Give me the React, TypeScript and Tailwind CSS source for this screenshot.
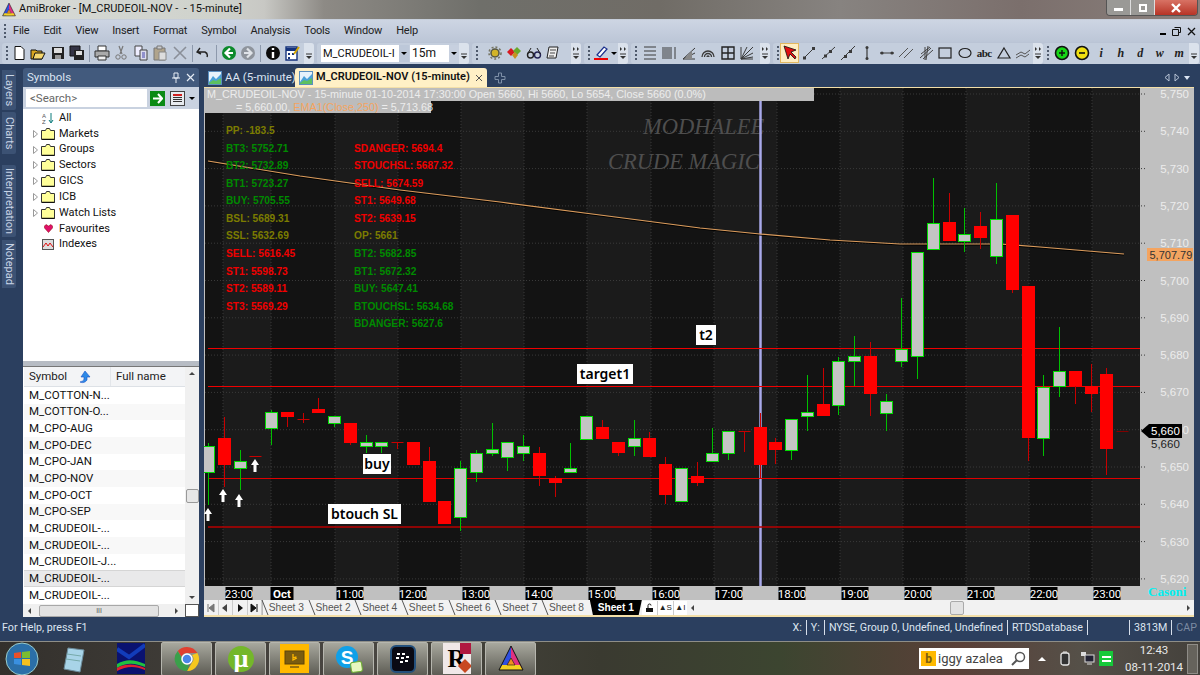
import type { ReactNode } from "react";

type Candle = [string, number, number, number, number];

// type, body top, body bottom, wick top, wick bottom (screen y)
const candles: Candle[] = [
  ["g", 446, 472, 443, 505], ["r", 438, 465, 417, 487], ["g", 461, 468, 450, 490], ["r", 456, 456, 456, 456],
  ["g", 412, 428, 410, 445], ["r", 412, 417, 412, 427], ["r", 419, 419, 413, 423], ["r", 409, 413, 398, 413],
  ["g", 416, 423, 416, 427], ["r", 423, 443, 423, 445], ["g", 442, 446, 435, 453], ["g", 442, 446, 442, 453],
  ["r", 442, 442, 442, 449], ["r", 442, 465, 442, 465], ["r", 461, 502, 447, 502], ["r", 501, 524, 501, 524],
  ["g", 468, 517, 461, 531], ["g", 453, 472, 450, 482], ["g", 449, 453, 423, 456], ["g", 442, 457, 442, 471],
  ["g", 446, 453, 435, 461], ["r", 453, 476, 447, 486], ["r", 478, 483, 476, 497], ["g", 468, 472, 443, 472],
  ["g", 416, 439, 416, 439], ["r", 427, 439, 420, 439], ["r", 442, 453, 442, 456], ["g", 438, 446, 420, 456],
  ["r", 438, 457, 432, 457], ["r", 464, 495, 457, 504], ["g", 468, 501, 468, 501], ["r", 476, 483, 462, 486],
  ["g", 453, 461, 428, 461], ["g", 431, 453, 431, 460], ["r", 431, 431, 431, 452], ["r", 427, 465, 413, 478],
  ["r", 442, 450, 438, 464], ["g", 419, 450, 419, 460], ["g", 412, 416, 375, 431], ["r", 404, 416, 368, 416],
  ["g", 361, 405, 357, 415], ["g", 356, 361, 336, 386], ["r", 356, 394, 342, 416], ["g", 401, 413, 394, 431],
  ["g", 349, 361, 298, 367], ["g", 252, 356, 252, 379], ["g", 223, 249, 178, 249], ["r", 222, 241, 193, 241],
  ["g", 234, 241, 208, 252], ["r", 226, 238, 212, 249], ["g", 219, 256, 183, 264], ["r", 215, 290, 215, 293],
  ["r", 286, 438, 286, 461], ["g", 387, 438, 375, 456], ["g", 371, 386, 327, 397], ["r", 371, 386, 371, 404],
  ["r", 386, 394, 364, 412], ["r", 374, 449, 368, 475], ["r", 431, 431, 431, 431],
];

const darkBands = [[205, 223], [271, 335], [398, 461], [524, 587], [651, 714], [777, 840], [903, 966], [1029, 1092]];
const gridX = [223, 271, 335, 398, 461, 524, 587, 651, 714, 777, 840, 903, 966, 1029, 1092];
const priceLabels = ["5,750", "5,740", "5,730", "5,720", "5,710", "5,700", "5,690", "5,680", "5,670", "5,660", "5,650", "5,640", "5,630", "5,620"];
const times: [string, number][] = [["23:00", 239], ["Oct", 282], ["11:00", 350], ["12:00", 413], ["13:00", 476], ["14:00", 539], ["15:00", 602], ["16:00", 666], ["17:00", 729], ["18:00", 792], ["19:00", 855], ["20:00", 918], ["21:00", 981], ["22:00", 1044], ["23:00", 1107]];

const olive = "#7c7c00";
const green = "#008a00";
const red = "#f00000";
const leftLabels: [string, string, number][] = [
  ["PP: -183.5", olive, 130], ["BT3: 5752.71", green, 148], ["BT2: 5732.89", green, 165], ["BT1: 5723.27", green, 183],
  ["BUY: 5705.55", green, 200], ["BSL: 5689.31", olive, 218], ["SSL: 5632.69", olive, 235], ["SELL: 5616.45", red, 253],
  ["ST1: 5598.73", red, 271], ["ST2: 5589.11", red, 288], ["ST3: 5569.29", red, 306],
];
const rightLabels: [string, string, number][] = [
  ["SDANGER: 5694.4", red, 148], ["STOUCHSL: 5687.32", red, 165], ["SELL: 5674.59", red, 183], ["ST1: 5649.68", red, 200],
  ["ST2: 5639.15", red, 218], ["OP: 5661", olive, 235], ["BT2: 5682.85", green, 253], ["BT1: 5672.32", green, 271],
  ["BUY: 5647.41", green, 288], ["BTOUCHSL: 5634.68", green, 306], ["BDANGER: 5627.6", green, 323],
];

const symbols = ["M_COTTON-N...", "M_COTTON-O...", "M_CPO-AUG", "M_CPO-DEC", "M_CPO-JAN", "M_CPO-NOV", "M_CPO-OCT", "M_CPO-SEP", "M_CRUDEOIL-...", "M_CRUDEOIL-...", "M_CRUDEOIL-J...", "M_CRUDEOIL-...", "M_CRUDEOIL-..."];

function Ico({ children, w = 16 }: { children: ReactNode; w?: number }) {
  return <svg width={w} height="16" viewBox={`0 0 ${w} 16`} fill="none">{children}</svg>;
}

function Cell({ children, w = "w-[19.5px]" }: { children: ReactNode; w?: string }) {
  return <div className={`${w} h-full flex items-center justify-center shrink-0`}>{children}</div>;
}

function Grip() {
  return (
    <div className="w-[5px] h-full flex flex-col justify-center gap-[2px] items-center shrink-0">
      {[0, 1, 2, 3].map((i) => <div key={i} className="w-[2px] h-[2px] bg-[#4f5a6c]" />)}
    </div>
  );
}

function Sep() {
  return <div className="w-px h-[17px] bg-[#8d99ac] mx-[2px] shrink-0" />;
}

function Overflow({ arrows = false }: { arrows?: boolean }) {
  return (
    <div className="w-[10px] h-full ml-auto bg-[#dbe2ec] rounded-r-[3px] flex flex-col items-center justify-center shrink-0">
      <svg width="8" height="16" viewBox="0 0 8 16">
        {arrows && <path d="M1 2l2 2-2 2zM5 2l2 2-2 2z" fill="#333" />}
        <path d="M1 9h6" stroke="#333" />
        <path d="M1 11h6l-3 3z" fill="#333" />
      </svg>
    </div>
  );
}

function Group({ w, children }: { w: string; children: ReactNode }) {
  return <div className={`${w} h-[21px] flex items-center bg-[#c4cedd] rounded-[3px] pl-[2px] shrink-0`}>{children}</div>;
}

function ToolBar() {
  const g = "#3a3a3a";
  return (
    <div className="h-[22px] flex gap-[3px] pl-[2px] bg-[#bac4d5] items-center overflow-hidden">
      <Group w="w-[312px]">
        <Grip />
        <Cell><Ico><path d="M4 1.5h6l3 3v10H4z" fill="#fff" stroke="#111" /></Ico></Cell>
        <Cell><Ico><path d="M1 5h5l1 1h5v8H1z" fill="#d8a520" stroke="#111" /><path d="M3 14l2-6h10l-3 6z" fill="#f5d76e" stroke="#111" /></Ico></Cell>
        <Cell><Ico><path d="M2 2h12v12H2z" fill="#222" /><path d="M4 3h8v5H4z" fill="#ddd" /><path d="M5 10h6v4H5z" fill="#999" /></Ico></Cell>
        <Cell><Ico><path d="M1 1h10v10H1z" fill="#334" stroke="#111" /><path d="M5 5h10v10H5z" fill="#222" /><path d="M7 6h6v4H7z" fill="#ddd" /></Ico></Cell>
        <Sep />
        <Cell><Ico><path d="M4 1h8v5H4z" fill="#fff" stroke="#333" /><path d="M1 6h14v6H1z" fill="#aaa" stroke="#333" /><path d="M4 11h8v4H4z" fill="#eee" stroke="#333" /></Ico></Cell>
        <Cell><Ico><path d="M6 1l3 8M10 1L7 9" stroke="#777" strokeWidth="1.2" /><circle cx="5" cy="12" r="2.2" stroke="#777" /><circle cx="11" cy="12" r="2.2" stroke="#777" /></Ico></Cell>
        <Cell><Ico><path d="M2 1h7v10H2z" fill="#eef" stroke="#444" /><path d="M7 5h7v10H7z" fill="#dde" stroke="#444" /><path d="M9 8h3M9 10h3M9 12h3" stroke="#44a" /></Ico></Cell>
        <Cell><Ico><path d="M2 3h11v12H2z" fill="#b0a48c" stroke="#777" /><path d="M5 1h5v3H5z" fill="#ccc" stroke="#777" /><path d="M7 7h7v8H7z" fill="#ddd" stroke="#888" /></Ico></Cell>
        <Cell><Ico><path d="M2 2l12 12M14 2L2 14" stroke="#8a8f98" strokeWidth="1.6" /></Ico></Cell>
        <Sep />
        <Cell><Ico><path d="M4 3L1 7l4 2M2 7h7a4 4 0 0 1 2 5" stroke="#222" strokeWidth="1.4" /></Ico></Cell>
        <Sep />
        <Cell><Ico><circle cx="8" cy="8" r="7" fill="#0c8a2c" /><path d="M9 3.5L4.5 8 9 12.5M5 8h7" stroke="#fff" strokeWidth="2.2" /></Ico></Cell>
        <Cell><Ico><circle cx="8" cy="8" r="7" fill="#8e949c" /><path d="M7 3.5L11.5 8 7 12.5M11 8H4" stroke="#dfe3e8" strokeWidth="2.2" /></Ico></Cell>
        <Sep />
        <Cell><Ico><circle cx="8" cy="8" r="7" fill="#0b0b0b" /><path d="M8 3v2M8 7v6" stroke="#fff" strokeWidth="2.4" /></Ico></Cell>
        <Cell><Ico><path d="M2 2h11v13H2z" fill="#fff" stroke="#14327c" strokeWidth="1.4" /><path d="M2 3h11v3H2zM4 8h2v2H4zM8 8h2v2H8zM4 12h2v2H4z" fill="#14327c" /><path d="M10 9l5-7" stroke="#d4a600" strokeWidth="2" /></Ico></Cell>
        <Overflow />
      </Group>
      <Group w="w-[152px]">
        <Grip />
        <div className="w-[78px] h-[17px] bg-white -ml-[3px] text-[11px] leading-[17px] pl-[2px] text-[#111] overflow-hidden whitespace-nowrap">M_CRUDEOIL-I</div>
        <div className="w-[10px] h-[17px] bg-[#bdc8d9] flex items-center justify-center"><div className="border-x-[3px] border-x-transparent border-t-[3px] border-t-black" /></div>
        <div className="w-[49px] h-[17px] bg-white ml-[1px] text-[12px] leading-[17px] pl-[2px] text-[#111] flex justify-between">
          15m
          <span className="w-[10px] h-[17px] bg-[#c7d0df] flex items-center justify-center"><span className="border-x-[3px] border-x-transparent border-t-[3px] border-t-black" /></span>
        </div>
        <Overflow />
      </Group>
      <Group w="w-[109px]">
        <Grip />
        <div className="w-[6px]" />
        <Cell><Ico><circle cx="8" cy="8" r="4" fill="#d2b428" stroke="#554" strokeWidth="1.5" /><circle cx="8" cy="8" r="6" stroke="#776" strokeWidth="1.6" strokeDasharray="2 2" /></Ico></Cell>
        <Cell><Ico><path d="M5 3l4 4-4 4-4-4z" fill="#d81820" /><path d="M11 2l4 4-4 4-4-4z" fill="#6aa82a" /><path d="M9 7l3 3-3 4-3-4z" fill="#c89020" /></Ico></Cell>
        <Cell><Ico><circle cx="4.5" cy="10" r="3" stroke="#222" strokeWidth="1.4" /><circle cx="11.5" cy="10" r="3" stroke="#225" strokeWidth="1.4" /><path d="M1.5 9L5 3M14.5 9L11 3M7.5 9h1" stroke="#222" /></Ico></Cell>
        <Cell><Ico><path d="M4 2h9l-2 11H2z" fill="#eee" stroke="#222" /><path d="M5 5h6M5 8h5M4 11h5" stroke="#444" /></Ico></Cell>
        <Overflow arrows />
      </Group>
      <Group w="w-[44px]">
        <Grip />
        <Cell w="w-[20px]"><Ico><path d="M4 10l7-8 3 2-7 8z" fill="#fff" stroke="#1a2f8c" strokeWidth="1.2" /><path d="M1 14h14" stroke="#f00000" strokeWidth="2" /></Ico></Cell>
        <div className="border-x-[3px] border-x-transparent border-t-[3px] border-t-black" />
        <Overflow arrows />
      </Group>
      <Group w="w-[139px]">
        <Grip />
        <div className="w-[2px]" />
        <Cell><Ico><path d="M2 2h12M2 6h12M2 10h12M2 14h12" stroke={g} /></Ico></Cell>
        <Cell><Ico><path d="M2 2v12M4 2v12M6 2v12M8 2v12M10 2v12M14 2v12" stroke={g} /></Ico></Cell>
        <Cell><Ico><path d="M2 14L14 3M2 14l12-6M2 14h12" stroke={g} /><path d="M3 14l8-8v8z" fill="#888" /></Ico></Cell>
        <Cell><Ico><path d="M2 12a6 6 0 0 1 12 0M4.5 12a3.5 3.5 0 0 1 7 0M7 12a1 1 0 0 1 2 0" stroke={g} strokeWidth="1.3" /></Ico></Cell>
        <Cell><Ico><path d="M2 2h12v12H2zM8 2v12M2 8h12" stroke="#222" strokeWidth="1.4" /></Ico></Cell>
        <Cell><Ico><path d="M2 14L14 2M2 14l12-6M2 14l12-2M2 14L8 2M2 2v12h12" stroke={g} /></Ico></Cell>
        <Overflow arrows />
      </Group>
      <Group w="w-[267px]">
        <Grip />
        <div className="w-[2px]" />
        <div className="w-[19px] h-[20px] bg-[#ffeec2] border border-[#e2b860] flex items-center justify-center shrink-0"><Ico><path d="M2 1l4 13 2-5 5 5 1-2-5-5 5-2z" fill="#e01010" stroke="#111" strokeWidth="0.8" /></Ico></div>
        <Cell><Ico><path d="M3 13L13 3" stroke={g} /><rect x="2" y="11.5" width="3" height="3" fill={g} /><rect x="11" y="2" width="3" height="3" fill={g} /></Ico></Cell>
        <Cell><Ico><path d="M2 14L15 2" stroke={g} /><rect x="4" y="9.5" width="3" height="3" fill={g} /><rect x="9" y="5" width="3" height="3" fill={g} /></Ico></Cell>
        <Cell><Ico><path d="M1 15L15 1" stroke={g} /><rect x="4" y="10" width="3" height="3" fill={g} /><rect x="9" y="5" width="3" height="3" fill={g} /></Ico></Cell>
        <Cell><Ico><path d="M8 2v12" stroke={g} strokeWidth="1.2" /><circle cx="8" cy="2.5" r="1.5" fill={g} /><circle cx="8" cy="13.5" r="1.5" fill={g} /></Ico></Cell>
        <Cell><Ico><path d="M1 8h14" stroke={g} /><circle cx="3" cy="8" r="1.6" fill={g} /><circle cx="13" cy="8" r="1.6" fill={g} /></Ico></Cell>
        <Cell><Ico><path d="M1 12L10 3M6 13L15 4" stroke="#555" /></Ico></Cell>
        <Cell><Ico><path d="M2 13L13 3M5 14L15 5M3 9l9-7M7 2v13M10 1l-2 14" stroke="#444" /></Ico></Cell>
        <Cell><Ico><rect x="2" y="3" width="12" height="10" stroke="#222" strokeWidth="1.2" /></Ico></Cell>
        <Cell><Ico><ellipse cx="8" cy="8" rx="6" ry="4.5" stroke="#222" strokeWidth="1.2" /></Ico></Cell>
        <Cell><span className="font-['Liberation_Serif',serif] font-bold text-[11px] text-[#222] leading-none tracking-[-0.5px]">abc</span></Cell>
        <Cell><Ico><path d="M8 3l6 10H2z" stroke="#222" strokeWidth="1.2" /></Ico></Cell>
        <Cell><Ico><path d="M1 10l5-3 4 2 5-4M1 13l5-3 4 2 4-3" stroke="#555" /></Ico></Cell>
        <Overflow arrows />
      </Group>
      <Group w="w-[156px]">
        <Grip />
        <div className="w-[3px]" />
        <Cell><Ico><circle cx="8" cy="8" r="6.5" fill="#16d616" stroke="#111" strokeWidth="1.6" /><path d="M5 8h6M8 5v6" stroke="#111" strokeWidth="1.4" /></Ico></Cell>
        <Cell><Ico><circle cx="8" cy="8" r="6.5" fill="#f0e010" stroke="#111" strokeWidth="1.6" /><path d="M5 8h6" stroke="#111" strokeWidth="1.6" /></Ico></Cell>
        {["i", "h", "d", "w", "m"].map((c) => (
          <Cell key={c}><span className="font-['Liberation_Serif',serif] font-bold italic text-[12px] text-[#222] leading-none">{c}</span></Cell>
        ))}
        <Overflow />
      </Group>
    </div>
  );
}

function SideTab({ label, h }: { label: string; h: string }) {
  return (
    <div className={`${h} w-[14px] bg-[#3c5274] rounded-r-[2px] flex items-center justify-center`}>
      <span className="[writing-mode:vertical-rl] text-[11px] text-[#c8d4e6] whitespace-nowrap">{label}</span>
    </div>
  );
}

function TreeRow({ label, folder, icon }: { label: string; folder?: boolean; icon?: ReactNode }) {
  return (
    <div className="h-[15.85px] flex items-center relative text-[11px] text-[#111]">
      <div className="w-[9px] ml-[8px] flex justify-center">
        {folder && <svg width="5" height="8" viewBox="0 0 5 8"><path d="M.5.5l4 3.5-4 3.5z" fill="#fff" stroke="#999" /></svg>}
      </div>
      <div className="w-[16px] flex justify-center">
        {folder ? (
          <svg width="14" height="12" viewBox="0 0 14 12"><path d="M.5 2.5h4l1-2h3l1 2h4v9H.5z" fill="#ffff99" stroke="#333" /><path d="M1 11.5h12.5" stroke="#111" strokeWidth="1.4" /></svg>
        ) : icon}
      </div>
      <span className="ml-[3px]">{label}</span>
    </div>
  );
}

function SymbolsPanel() {
  return (
    <div className="w-[176px] h-[549px] bg-[#425a7d] rounded-t-[3px] flex flex-col shrink-0 overflow-hidden">
      <div className="h-[19px] flex items-center px-[4px] text-[11.5px] text-[#dbe4f2] justify-between shrink-0">
        Symbols
        <div className="flex items-center gap-[5px]">
          <svg width="10" height="11" viewBox="0 0 10 11"><path d="M3 1h4v5H3zM1 6h8M5 6v5" stroke="#e6ecf5" fill="none" /></svg>
          <svg width="9" height="9" viewBox="0 0 9 9"><path d="M1 1l7 7M8 1L1 8" stroke="#e6ecf5" strokeWidth="1.2" /></svg>
        </div>
      </div>
      <div className="h-[22px] bg-[#c9d2e0] flex items-center pl-[3px] shrink-0">
        <div className="w-[121px] h-[18px] bg-white text-[11.5px] text-[#666] pl-[4px] leading-[18px]">&lt;Search&gt;</div>
        <div className="w-[15px] h-[15px] ml-[3px] bg-[#0a8a14] flex items-center justify-center">
          <svg width="11" height="11" viewBox="0 0 11 11"><path d="M6 1l4 4.500-4 4.500M1 5.500h8" stroke="#fff" strokeWidth="2" fill="none" /></svg>
        </div>
        <div className="ml-[5px] w-[15px] h-[15px] bg-[#e8ebef] border border-[#444] flex flex-col gap-[1px] p-[2px]">
          <div className="h-[2px] bg-[#d02020]" /><div className="h-px bg-[#333]" /><div className="h-px bg-[#333]" /><div className="h-px bg-[#333]" />
        </div>
        <div className="ml-[4px] border-x-[3px] border-x-transparent border-t-[3px] border-t-black" />
      </div>
      <div className="h-[252px] bg-white pt-px shrink-0">
        <TreeRow label="All" icon={<svg width="12" height="12" viewBox="0 0 12 12"><text x="0" y="6" fontSize="6" fill="#555" fontFamily="Liberation Sans">A</text><text x="0" y="12" fontSize="6" fill="#555" fontFamily="Liberation Sans">Z</text><path d="M9 1v9M7 8l2 3 2-3" stroke="#0a7a7a" fill="none" /></svg>} />
        {["Markets", "Groups", "Sectors", "GICS", "ICB", "Watch Lists"].map((l) => <TreeRow key={l} label={l} folder />)}
        <TreeRow label="Favourites" icon={<svg width="9" height="9" viewBox="0 0 9 9"><path d="M4.500 8.500L.5 4V2l1.500-1.500L4.500 2 7 .5 8.500 2v2z" fill="#e0106a" stroke="#800" strokeWidth=".5" /></svg>} />
        <TreeRow label="Indexes" icon={<svg width="12" height="11" viewBox="0 0 12 11"><rect x=".5" y=".5" width="11" height="10" fill="#ddd" stroke="#555" /><path d="M1 8l3-4 2 3 2-3 3 4" stroke="#e01010" fill="none" /></svg>} />
      </div>
      <div className="h-[6px] bg-[#b7bcc4] border-b border-[#777] shrink-0" />
      <div className="flex-1 bg-white flex flex-col min-h-0">
        <div className="flex flex-1 min-h-0">
          <div className="flex-1 min-w-0 pl-[1px] flex flex-col overflow-hidden">
            <div className="h-[20px] flex items-center text-[11.5px] text-[#222] bg-[#f3f4f6] border-b border-[#dde1e6] shrink-0">
              <div className="w-[87px] flex items-center pl-[5px] h-full border-r border-[#e3e6ea]">
                Symbol
                <svg className="ml-[11px]" width="14" height="14" viewBox="0 0 14 14"><path d="M7 1l5 6H9v3c-2 3-5 3-7 2 2-1 4-1 4-3V7H3z" fill="#2e8ae6" stroke="#1a50c8" strokeWidth=".6" /></svg>
              </div>
              <span className="pl-[5px]">Full name</span>
            </div>
            {symbols.map((s, i) => (
              <div key={i} className={`h-[16.67px] shrink-0 flex items-center text-[11.5px] text-[#111] pl-[5px] ${i === 11 ? "bg-[#e9e9ea] border-y border-[#d5d5d5]" : i % 2 ? "bg-[#f8f8f8]" : "bg-white"}`}>
                <span className="w-[82px] whitespace-nowrap">{s}</span>
              </div>
            ))}
          </div>
          <div className="w-[14px] bg-[#f0f0f0] flex flex-col items-center justify-between py-[5px] relative shrink-0">
            <div className="border-x-[3px] border-x-transparent border-b-[3px] border-b-[#444]" />
            <div className="absolute top-[122px] w-[13px] h-[14px] bg-[#e6e6e6] border border-[#999] rounded-[2px]" />
            <div className="border-x-[3px] border-x-transparent border-t-[3px] border-t-[#444]" />
          </div>
        </div>
        <div className="h-[13px] bg-[#f0f0f0] flex items-center shrink-0">
          <div className="w-[12px] flex justify-center"><div className="border-y-[3px] border-y-transparent border-r-[3px] border-r-[#444]" /></div>
          <div className="w-[120px] h-[12px] ml-[4px] bg-[#e2e2e2] border border-[#a8a8a8] rounded-[2px] text-[7px] leading-[10px] text-center text-[#555]">III</div>
          <div className="ml-[16px] border-y-[3px] border-y-transparent border-l-[3px] border-l-[#444]" />
          <div className="ml-auto w-[14px] h-full bg-white border border-[#555]" />
        </div>
      </div>
    </div>
  );
}

function Chart() {
  const ema = "208,161 300,176 400,190 500,202 600,215 700,228 760,234 830,240 900,244 960,244 1000,244 1040,247 1124,254";
  const axis = { fontFamily: "Liberation Sans", fontSize: 11.5 };
  return (
    <svg width="990" height="512" viewBox="204 88 990 512" className="block">
      <rect x="204" y="88" width="990" height="512" fill="#c0c0c0" />
      <rect x="205" y="88" width="935" height="498" fill="#1b1b1b" />
      {darkBands.map(([a, b]) => <rect key={a} x={a} y="88" width={b - a} height="498" fill="#131313" />)}
      {gridX.map((x) => <line key={x} x1={x} x2={x} y1="88" y2="586" stroke="#3a3a3a" strokeDasharray="1 2" />)}
      {priceLabels.map((p, i) => {
        const y = 94 + i * 37.3;
        return <line key={p} x1="205" x2="1146" y1={y} y2={y} stroke="#3a3a3a" strokeDasharray="1 2" />;
      })}
      <g fontFamily="Liberation Serif" fontStyle="italic" fontSize="22.5" fill="#4e4e4e">
        <text x="643" y="134">MODHALEE</text>
        <text x="608" y="169">CRUDE MAGIC</text>
      </g>
      <line x1="760.5" x2="760.5" y1="101" y2="586" stroke="#a9a9ea" strokeWidth="2.5" />
      <polyline points={ema} fill="none" stroke="#000" strokeWidth="1" transform="translate(0 1)" />
      <polyline points={ema} fill="none" stroke="#dc9c5c" strokeWidth="1.2" />
      <g fontFamily="Liberation Sans" fontSize="10.2" fontWeight="700">
        {leftLabels.map(([t, c, y]) => <text key={t} x="226" y={y + 4} fill={c}>{t}</text>)}
        {rightLabels.map(([t, c, y]) => <text key={t} x="354" y={y + 4} fill={c}>{t}</text>)}
      </g>
      <line x1="208" x2="1140" y1="348.500" y2="348.500" stroke="#f00000" />
      <line x1="208" x2="1140" y1="386.500" y2="386.500" stroke="#f00000" />
      <line x1="208" x2="1140" y1="478.500" y2="478.500" stroke="#e00000" />
      <line x1="208" x2="1140" y1="527" y2="527" stroke="#b80000" strokeWidth="1.5" />
      {candles.map(([t, top, bot, wt, wb], i) => {
        const x = Math.round(208 + i * 15.76) + 0.5;
        const up = t === "g";
        return (
          <g key={i}>
            {wb > wt && <line x1={x} x2={x} y1={wt} y2={wb} stroke={up ? "#00c000" : "#c80000"} />}
            {bot === top ? (
              i !== 58 ? <line x1={x - 6} x2={x + 6} y1={top + 0.5} y2={top + 0.5} stroke="#c80000" /> : <line x1={x - 6} x2={x + 6} y1={top + 0.5} y2={top + 0.5} stroke="#800000" />
            ) : up ? (
              <rect x={x - 6} y={top + 0.5} width="12" height={bot - top} fill="#c4c4c4" stroke="#00dc00" />
            ) : (
              <rect x={x - 6.5} y={top} width="13" height={bot - top} fill="#ff0000" />
            )}
          </g>
        );
      })}
      {[[208, 515], [223, 496], [239, 501], [255, 466]].map(([x, y]) => (
        <path key={x} d={`M${x} ${y - 7}l4 6h-2.500v7h-3v-7h-2.500z`} fill="#fff" />
      ))}
      <rect x="205" y="586" width="935" height="14" fill="#c0c0c0" />
      {times.map(([t, x], i) => (
        <g key={i}>
          <rect x={x - 13.5} y="587" width={t === "Oct" ? 23 : 27} height="13" fill="#000" transform={t === "Oct" ? "translate(2 0)" : undefined} />
          <text x={x} y="597.500" textAnchor="middle" fill="#fff" fontFamily="Roboto" fontSize="11.5" fontWeight={t === "Oct" ? 700 : 400}>{t}</text>
        </g>
      ))}
      {priceLabels.map((p, i) => (
        <text key={p} x="1189" y={94 + i * 37.3 + 4} textAnchor="end" fill="#ececec" {...axis}>{p}</text>
      ))}
      <rect x="1147" y="248" width="46" height="13" fill="#f4a460" />
      <text x="1149.500" y="258.500" fill="#333" fontFamily="Liberation Sans" fontSize="11">5,707.79</text>
      <path d="M1141 431l8-7h33v14h-33z" fill="#000" />
      <text x="1151" y="435" fill="#fff" {...axis}>5,660</text>
      <text x="1151" y="448" fill="#222" {...axis}>5,660</text>
      <text x="1148" y="596" fill="#00f0f0" fontFamily="Liberation Serif" fontSize="13" fontWeight="700">Casoni</text>
    </svg>
  );
}

function SheetTabs() {
  const names = ["Sheet 3", "Sheet 2", "Sheet 4", "Sheet 5", "Sheet 6", "Sheet 7", "Sheet 8"];
  return (
    <div className="h-[15px] bg-[#f2f2f2] flex items-center text-[10.2px] text-[#555] font-['Liberation_Sans',sans-serif]">
      <div className="flex items-center w-[59px] h-full border-r border-[#bbb] shrink-0">
        {[
          <path key="a" d="M2 1v8M8 1L3 5l5 4z" fill="#777" stroke="#777" />,
          <path key="b" d="M7 1L2 5l5 4z" fill="#444" />,
          <path key="c" d="M3 1l5 4-5 4z" fill="#111" />,
          <path key="d" d="M8 1v8M2 1l5 4-5 4z" fill="#111" stroke="#111" />,
        ].map((p, i) => (
          <div key={i} className="w-[14.500px] h-full flex items-center justify-center border-r border-[#ccc]">
            <svg width="10" height="10" viewBox="0 0 10 10">{p}</svg>
          </div>
        ))}
      </div>
      {names.map((n) => (
        <div key={n} className="w-[46.700px] h-full relative flex items-center justify-center shrink-0">
          <svg className="absolute left-[-2px] top-0" width="8" height="15" viewBox="0 0 8 15"><path d="M1 0l6 15" stroke="#555" /></svg>
          {n}
        </div>
      ))}
      <div className="w-[52px] h-full bg-black text-white font-bold flex items-center justify-center shrink-0 [clip-path:polygon(0_0,100%_0,94%_100%,6%_100%)]">Sheet 1</div>
      <div className="flex h-full items-center shrink-0">
        <div className="w-[16px] h-[14px] bg-white border-r border-[#ccc] flex items-center justify-center"><svg width="9" height="10" viewBox="0 0 9 10"><path d="M1 5h7v4H1z" fill="#111" /><path d="M3 5V2.500a1.500 1.500 0 0 1 3 0" stroke="#111" fill="none" /></svg></div>
        <div className="w-[16px] h-[14px] bg-white border-r border-[#ccc] text-[8px] text-[#222] text-center leading-[14px]">▲S</div>
        <div className="w-[13px] h-[14px] bg-white text-[8px] text-[#222] text-center leading-[14px]">▲I</div>
      </div>
      <div className="flex-1 h-full flex items-center px-[4px] relative">
        <div className="border-y-[3px] border-y-transparent border-r-[3px] border-r-[#444]" />
        <div className="ml-[256px] w-[14px] h-[14px] bg-[#e3e3e3] border border-[#aaa] rounded-[2px]" />
        <div className="ml-auto border-y-[3px] border-y-transparent border-l-[3px] border-l-[#444]" />
      </div>
    </div>
  );
}

function ChartPane() {
  return (
    <div className="w-[990px] flex flex-col shrink-0">
      <div className="h-[19px] flex items-end text-[11.500px] relative">
        <div className="w-[3px]" />
        <div className="h-[18px] w-[88px] flex items-center gap-[3px] text-[#dbe4f2] pl-[1px] whitespace-nowrap">
          <ChartTabIcon />AA (5-minute)
        </div>
        <div className="h-[19px] w-[192px] bg-[#fff0c6] rounded-t-[3px] flex items-center pl-[4px] gap-[3px] text-[11px] font-semibold text-[#111]">
          <ChartTabIcon /><span className="whitespace-nowrap">M_CRUDEOIL-NOV (15-minute)</span>
          <svg className="ml-auto mr-[4px]" width="8" height="8" viewBox="0 0 8 8"><path d="M1 1l6 6M7 1L1 7" stroke="#555" /></svg>
        </div>
        <svg className="ml-[7px] mb-[3px]" width="12" height="12" viewBox="0 0 12 12"><path d="M4.500 1h3v3.500H11v3H7.500V11h-3V7.500H1v-3h3.500z" stroke="#7f90a8" fill="none" /></svg>
        <div className="ml-auto mr-[4px] mb-[5px] flex items-center gap-[4px]">
          <svg width="26" height="9" viewBox="0 0 26 9"><path d="M5 1L1 4.500 5 8zM11 1l4 3.500L11 8z" stroke="#b8c4d6" fill="none" /><path d="M20 3h6l-3 4z" fill="#dbe4f2" /></svg>
        </div>
      </div>
      <div className="bg-[#f3dfa8] pt-px pb-[2px] relative">
        <Chart />
        <SheetTabs />
        <div className="absolute left-px top-px font-['Liberation_Sans',sans-serif] text-[10.800px] text-[#ececec] leading-[12.500px]">
          <div className="w-[609px] h-[13px] bg-[#bcbcbc] pl-[2px] whitespace-nowrap">M_CRUDEOIL-NOV - 15-minute 01-10-2014 17:30:00 Open 5660, Hi 5660, Lo 5654, Close 5660 (0.0%)</div>
          <div className="w-[226px] h-[12px] bg-[#bcbcbc] pl-[31px] whitespace-nowrap">= 5,660.00, <span className="text-[#f4a460]">EMA1(Close,250)</span> = 5,713.68</div>
        </div>
        <Note left="left-[492px]" top="top-[238px]" w="w-[20px]">t2</Note>
        <Note left="left-[373px]" top="top-[277px]" w="w-[56px]">target1</Note>
        <Note left="left-[159px]" top="top-[367px]" w="w-[28px]">buy</Note>
        <Note left="left-[124px]" top="top-[417px]" w="w-[73px]">btouch SL</Note>
      </div>
    </div>
  );
}

function Note({ left, top, w, children }: { left: string; top: string; w: string; children: ReactNode }) {
  return (
    <div className={`absolute ${left} ${top} ${w} h-[20px] bg-white text-black text-[14px] font-['Noto_Sans',sans-serif] font-semibold leading-[20px] text-center whitespace-nowrap`}>{children}</div>
  );
}

function ChartTabIcon() {
  return (
    <svg width="14" height="14" viewBox="0 0 14 14" className="shrink-0">
      <rect x=".5" y=".5" width="13" height="13" fill="#e6f2fb" stroke="#5a8fc0" />
      <path d="M1 11l4-6 3 3 5-5v10H1z" fill="#4aa0d8" />
      <path d="M1 12l4-3 3 1 5-3v6H1z" fill="#5cc060" />
    </svg>
  );
}

function StatusBar() {
  const seg = "border-r border-[#d7dfeb] h-[15px] leading-[15px] px-[4px]";
  return (
    <div className="h-[22px] flex items-center text-[10.700px] text-[#dde5f0] pl-[2px]">
      For Help, press F1
      <div className="ml-auto flex items-center pr-[3px]">
        <span className={seg}>X:</span>
        <span className={seg}>Y:</span>
        <span className={seg}>NYSE, Group 0, Undefined, Undefined</span>
        <span className={seg}>RTDSDatabase</span>
        <span className="w-[42px] border-r border-[#d7dfeb] h-[15px]" />
        <span className={seg}>3813M</span>
        <span className="pl-[4px] text-[#7c8ba3]">CAP</span>
      </div>
    </div>
  );
}

function TaskButton({ children }: { children: ReactNode }) {
  return (
    <div className="w-[51px] h-[34px] mr-[3px] rounded-[2px] border border-[#b6b6ae] bg-[linear-gradient(180deg,#a8a89e,#5d5c54)] flex items-center justify-center shrink-0">{children}</div>
  );
}

function Taskbar() {
  return (
    <div className="h-[34px] flex items-center border-t border-[#8e8e88] bg-[linear-gradient(90deg,#33302c_0%,#4a4742_30%,#3a3a30_50%,#3c4530_65%,#5a4038_80%,#555048_90%,#44413c_100%)]">
      <div className="w-[44px] flex justify-center shrink-0">
        <svg width="34" height="34" viewBox="0 0 34 34">
          <circle cx="17" cy="17" r="16" fill="#2b6fa8" stroke="#9cc" />
          <path d="M9 11l7-1v6H9z" fill="#e8502a" /><path d="M17 10l8-1v7h-8z" fill="#7cbc30" /><path d="M9 17h7v6l-7-1z" fill="#3a90e0" /><path d="M17 17h8v7l-8-1z" fill="#f4c020" />
        </svg>
      </div>
      <div className="w-[60px] flex justify-center shrink-0">
        <svg width="26" height="28" viewBox="0 0 26 28"><path d="M7 3l16 2-4 22-16-3z" fill="#a8d4e8" stroke="#6c8c9c" /><path d="M6 9l14 2M5 14l14 2" stroke="#7aa" /></svg>
      </div>
      <div className="w-[57px] flex justify-start pl-[13px] shrink-0">
        <svg width="28" height="31" viewBox="0 0 28 31"><rect width="28" height="31" fill="#0a1270" /><path d="M0 21c10-6 18-4 28 0v3c-10-4-18-5-28 1z" fill="#20c040" /><path d="M0 25c10-5 18-4 28 0v2c-10-4-18-4-28 1z" fill="#e02030" /><path d="M0 6l12 8 16-12" stroke="#123cba" strokeWidth="4" fill="none" /></svg>
      </div>
      <TaskButton>
        <svg width="26" height="26" viewBox="0 0 26 26">
          <path d="M13 1a12 12 0 0 1 10.400 6H13a6 6 0 0 0-5.600 3.800L3.800 5A12 12 0 0 1 13 1z" fill="#e04030" />
          <path d="M23.400 7A12 12 0 0 1 13 25l5-8.500A6 6 0 0 0 18 9z" fill="#f6c81e" />
          <path d="M13 25A12 12 0 0 1 3.800 5l5 8.700A6 6 0 0 0 15 18.700z" fill="#3aa04a" />
          <circle cx="13" cy="13" r="5" fill="#4a86e8" stroke="#fff" strokeWidth="1.500" />
        </svg>
      </TaskButton>
      <TaskButton>
        <svg width="28" height="28" viewBox="0 0 28 28">
          <circle cx="14" cy="14" r="13" fill="#74b72a" />
          <text x="14" y="22" textAnchor="middle" fill="#fff" fontFamily="Liberation Serif" fontSize="26" fontWeight="700">µ</text>
        </svg>
      </TaskButton>
      <TaskButton>
        <div className="w-[29px] h-[29px] bg-[#ffb900] flex items-center justify-center">
          <svg width="21" height="18" viewBox="0 0 21 18"><rect x="1" y="1" width="19" height="13" fill="#7a5c10" stroke="#5c4508" /><path d="M9 4v6l3-1.500-1.500-1 2-.5" stroke="#ffb900" strokeWidth="1.300" fill="none" /><path d="M6 17h9" stroke="#7a5c10" strokeWidth="1.500" /></svg>
        </div>
      </TaskButton>
      <TaskButton>
        <svg width="30" height="30" viewBox="0 0 30 30">
          <circle cx="13" cy="13" r="11" fill="#10a0e8" />
          <text x="13" y="20" textAnchor="middle" fill="#fff" fontFamily="Liberation Sans" fontSize="19" fontWeight="700">S</text>
          <rect x="17" y="18" width="11" height="10" rx="2" fill="#e8f8c0" stroke="#6cb030" transform="rotate(-8 22 23)" />
        </svg>
      </TaskButton>
      <TaskButton>
        <div className="w-[26px] h-[28px] bg-[#0a0a14] rounded-[6px] border-2 border-[#24507c] flex items-center justify-center">
          <svg width="15" height="13" viewBox="0 0 15 13" fill="#fff"><rect x="2" y="1" width="3" height="2" /><rect x="7" y="1" width="3" height="2" /><rect x="1" y="5" width="3" height="2" /><rect x="6" y="5" width="3" height="2" /><rect x="11" y="4" width="3" height="2" /><rect x="5" y="9" width="3" height="2" /><rect x="10" y="8" width="3" height="2" /></svg>
        </div>
      </TaskButton>
      <TaskButton>
        <div className="w-[28px] h-[31px] bg-[#f0e8e8] relative overflow-hidden flex items-center justify-center">
          <span className="font-['Liberation_Serif',serif] font-bold text-[25px] leading-none text-black">R</span>
          <div className="absolute right-0 top-0 w-[11px] h-[11px] bg-[#b01840]" />
          <div className="absolute right-[1px] bottom-[3px] w-[10px] h-[10px] bg-[#c84820] rotate-45" />
        </div>
      </TaskButton>
      <TaskButton>
        <Amibroker size={30} />
      </TaskButton>
      <div className="ml-auto w-[110px] h-[21px] bg-white flex items-center shrink-0 text-[13px] text-[#444]">
        <div className="w-[15px] h-[15px] bg-[#ffb900] ml-[2px] flex items-center justify-center text-[#7a5c10] text-[12px] leading-none font-bold">b</div>
        <span className="ml-[2px]">iggy azalea</span>
        <svg className="ml-auto mr-[3px]" width="15" height="15" viewBox="0 0 15 15"><circle cx="9" cy="6" r="4.500" stroke="#555" strokeWidth="1.500" fill="none" /><path d="M6 9l-5 5" stroke="#555" strokeWidth="2" /></svg>
      </div>
      <div className="w-[26px] flex justify-center shrink-0"><div className="border-x-[4px] border-x-transparent border-b-[4px] border-b-white" /></div>
      <div className="w-[20px] flex justify-center shrink-0"><svg width="10" height="15" viewBox="0 0 10 15"><rect x="1" y="2" width="8" height="12" rx="2" stroke="#e8e8e8" fill="#333" strokeWidth="1.300" /><path d="M3 1h4" stroke="#e8e8e8" /></svg></div>
      <div className="w-[24px] flex justify-center shrink-0"><svg width="15" height="15" viewBox="0 0 15 15"><rect x="1" y="1" width="5" height="4" fill="#ddd" /><rect x="5" y="4" width="9" height="7" fill="#223" stroke="#ddd" /><path d="M7 13h5" stroke="#ddd" /></svg></div>
      <div className="w-[14px] h-[15px] bg-[#16c93a] flex flex-col items-center justify-center gap-[2px] shrink-0">
        <div className="w-[9px] h-[2px] bg-white" /><div className="w-[9px] h-[2px] bg-white" />
      </div>
      <div className="w-[62px] ml-[10px] text-[11.5px] text-[#e8e8e8] text-center leading-[17px] shrink-0 whitespace-nowrap">
        <div>12:43</div><div>08-11-2014</div>
      </div>
      <div className="w-[11px] h-[30px] ml-[2px] mr-[2px] bg-[#66635c] border border-[#8f8d88] shrink-0" />
    </div>
  );
}

function Amibroker({ size }: { size: number }) {
  return (
    <svg width={size} height={size} viewBox="0 0 30 30">
      <path d="M15 2L3 26h6L15 14z" fill="#3050e0" />
      <path d="M15 2l12 24h-6L15 14z" fill="#e03080" />
      <path d="M3 26l3-5h18l3 5z" fill="#f4d020" />
      <path d="M15 14l4 7h-8z" fill="#f09020" stroke="#111" strokeWidth=".6" />
      <path d="M15 2L3 26h24z" fill="none" stroke="#111" strokeWidth="1" />
    </svg>
  );
}

export default function App() {
  const menus = ["File", "Edit", "View", "Insert", "Format", "Symbol", "Analysis", "Tools", "Window", "Help"];
  return (
    <div className="w-[1200px] h-[675px] overflow-hidden flex flex-col font-['Roboto',sans-serif] bg-[#2b3f5f]">
      <div className="h-[20px] flex items-center bg-[linear-gradient(90deg,#d8dbd6_0%,#cfd2cc_18%,#c8c8c4_22%,#8d8a85_27%,#6f6f6a_40%,#706c66_55%,#878380_70%,#7b6f6c_85%,#8a807c_100%)] border-b border-[#c6ceda] shrink-0">
        <div className="ml-[1px] shrink-0"><Amibroker size={16} /></div>
        <span className="ml-[2px] text-[11px] text-[#111] whitespace-pre">AmiBroker - [M_CRUDEOIL-NOV -  - 15-minute]</span>
        <div className="ml-auto mr-[2px] mb-[3px] h-[16px] flex border border-[#555] border-t-0 rounded-b-[4px] overflow-hidden">
          <div className="w-[24px] bg-[#9a9996] border-r border-[#ddd] flex items-center justify-center"><div className="w-[9px] h-[3px] bg-white mt-[3px]" /></div>
          <div className="w-[24px] bg-[#9a9996] border-r border-[#ddd] flex items-center justify-center"><div className="w-[8px] h-[8px] border-2 border-white" /></div>
          <div className="w-[42px] bg-[linear-gradient(180deg,#d87264,#b73426)] flex items-center justify-center"><svg width="10" height="10" viewBox="0 0 10 10"><path d="M1 1l8 8M9 1L1 9" stroke="#fff" strokeWidth="2.400" /></svg></div>
        </div>
      </div>
      <div className="h-[22px] flex items-center bg-[linear-gradient(180deg,#cdd5e3,#bcc6d7)] text-[11px] tracking-[-0.2px] text-[#222] shrink-0">
        <div className="ml-[4px] flex flex-col gap-[2px] mr-[7px]">{[0, 1, 2, 3].map((i) => <div key={i} className="w-[2px] h-[2px] bg-[#4f5a6c]" />)}</div>
        <div className="flex gap-[14px]">{menus.map((m) => <span key={m}>{m}</span>)}</div>
        <div className="ml-auto mr-[4px] flex items-center gap-[6px]">
          <div className="w-[6px] h-[2px] bg-black mt-[6px]" />
          <svg width="9" height="9" viewBox="0 0 9 9"><path d="M2.500.5h6v5h-2M.5 2.500h6v6h-6z" stroke="#111" fill="none" /></svg>
          <svg width="9" height="9" viewBox="0 0 9 9"><path d="M1 1l7 7M8 1L1 8" stroke="#111" strokeWidth="1.300" /></svg>
        </div>
      </div>
      <ToolBar />
      <div className="flex-1 min-h-0 flex flex-col">
        <div className="h-[553px] flex pt-[4px] shrink-0">
          <div className="w-[23px] flex flex-col pl-[2px] shrink-0">
            <div className="h-[40px] mt-[2px] mb-[2px]"><SideTab label="Layers" h="h-[40px]" /></div>
            <SideTab label="Charts" h="h-[42px]" />
            <div className="h-[11px]" />
            <SideTab label="Interpretation" h="h-[72px]" />
            <div className="h-[3px]" />
            <SideTab label="Notepad" h="h-[48px]" />
          </div>
          <SymbolsPanel />
          <div className="w-[5px]" />
          <ChartPane />
        </div>
        <StatusBar />
      </div>
      <Taskbar />
    </div>
  );
}
